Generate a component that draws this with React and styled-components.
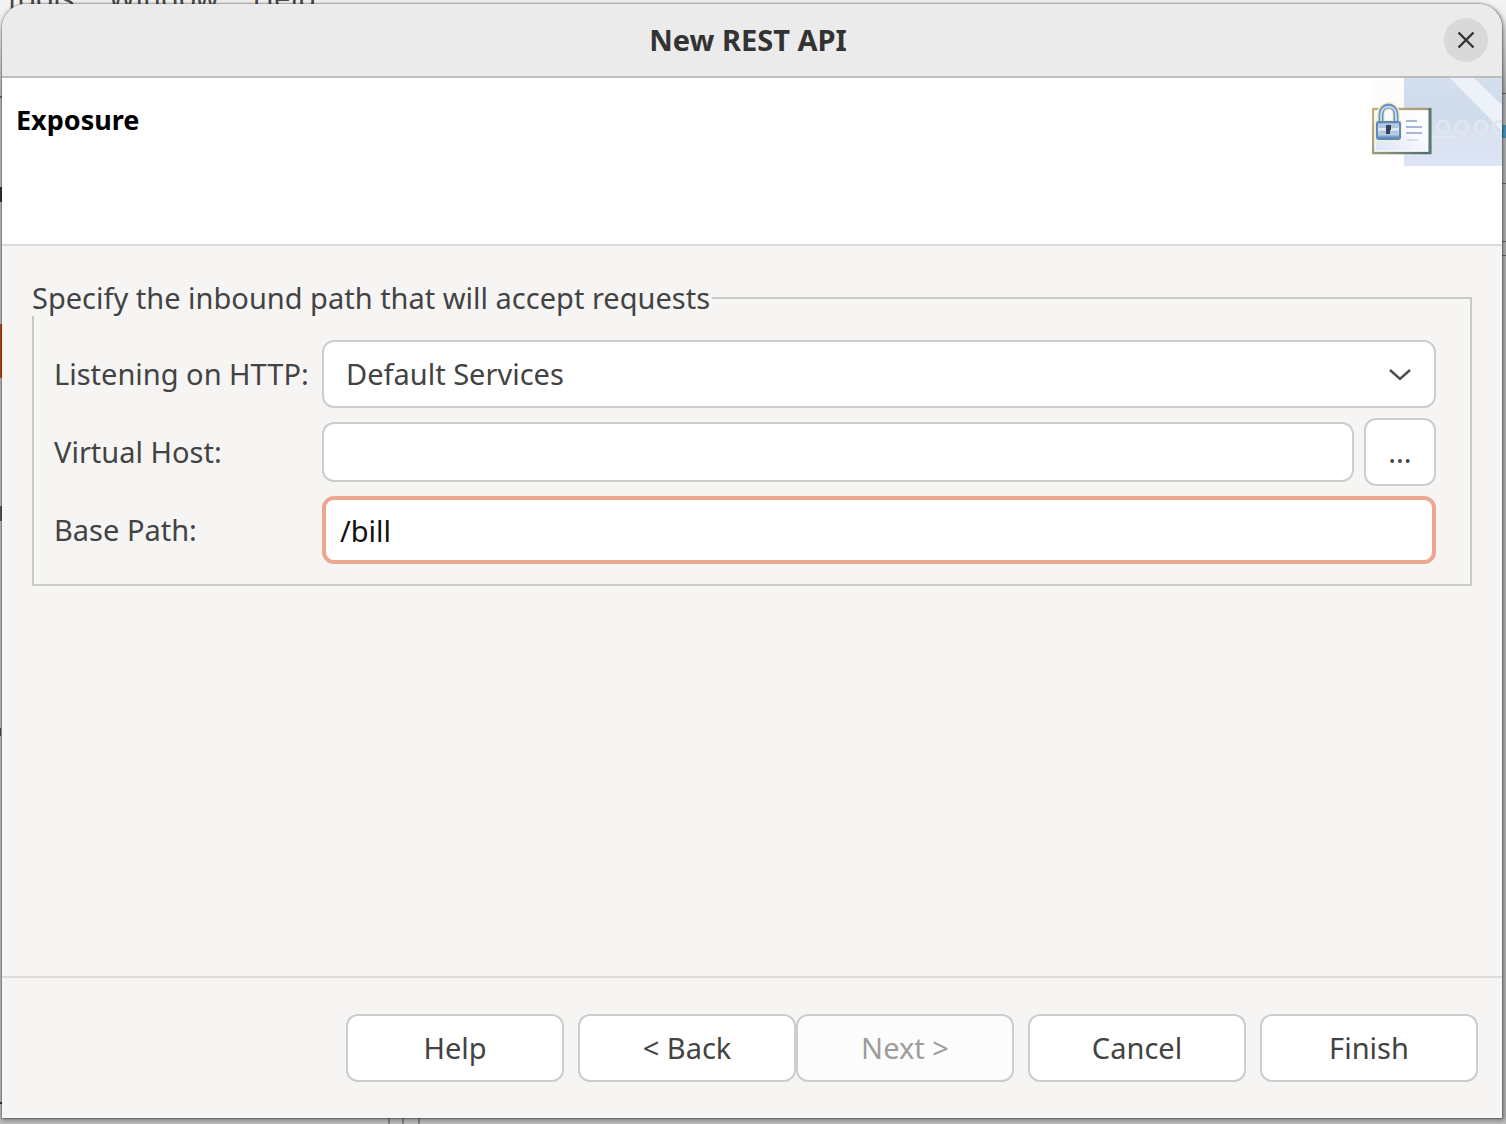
import React, { useState } from "react";
import styled, { createGlobalStyle } from "styled-components";

const GlobalStyle = createGlobalStyle`
  *, *::before, *::after { box-sizing: border-box; }
  body {
    margin: 0;
    font-family: "Noto Sans", "Open Sans", sans-serif;
    font-size: 29px;
    line-height: 36px;
    color: #434343;
  }
`;

const Desktop = styled.div`
  position: relative;
  display: flex;
  min-height: 100vh;
  padding: 4px 4px 6px 2px;
  overflow: hidden;
  background: linear-gradient(#f4f4f4, #f0f0f0 16px, #bcbcbc 90px, #bcbcbc);
`;

const MenuBar = styled.nav`
  position: absolute;
  top: -18px;
  left: 4px;
  display: flex;
  gap: 34px;
  color: #4a4a4a;
  line-height: 32px;
`;

const Fragment = styled.span`
  position: absolute;
  top: ${(p) => p.$top}px;
  ${(p) => p.$side}: 0;
  width: ${(p) => p.$width || 4}px;
  height: ${(p) => p.$height}px;
  background: ${(p) => p.$color || "#6a6a6a"};
`;

const PaneEdge = styled.span`
  position: absolute;
  bottom: 0;
  left: ${(p) => p.$left}px;
  width: 2px;
  height: 6px;
  background: #858585;
`;

const Dialog = styled.main`
  position: relative;
  flex: 1;
  min-width: 0;
  display: flex;
  flex-direction: column;
  background: #f6f5f4;
  border-radius: 24px 24px 0 0;
  box-shadow: 0 0 0 1px rgba(0, 0, 0, 0.15), 1px 1px 4px 1px rgba(0, 0, 0, 0.4);
`;

const TitleBar = styled.header`
  display: grid;
  grid-template-columns: 1fr auto 1fr;
  align-items: center;
  height: 74px;
  padding: 0 14px 0 6px;
  background: #ebebeb;
  border-bottom: 2px solid #bdbdbd;
  border-radius: 24px 24px 0 0;
`;

const Title = styled.h1`
  grid-column: 2;
  margin: 0;
  font-size: 29px;
  line-height: 36px;
  font-weight: 700;
  color: #333333;
`;

const CloseButton = styled.button`
  justify-self: end;
  display: grid;
  place-items: center;
  width: 44px;
  height: 44px;
  padding: 0;
  border: 0;
  border-radius: 50%;
  background: #d9d9d9;
  color: #333333;
`;

const Banner = styled.section`
  display: flex;
  justify-content: space-between;
  align-items: flex-start;
  height: 168px;
  background: #ffffff;
  border-bottom: 2px solid #dcdcdb;
`;

const PageTitle = styled.h2`
  margin: 0;
  padding: 24px 14px;
  font-size: 27px;
  line-height: 36px;
  font-weight: 700;
  color: #000000;
`;

const Content = styled.form`
  flex: 1;
  display: flex;
  flex-direction: column;
`;

const Page = styled.div`
  flex: 1;
  padding: 34px 30px;
`;

const Group = styled.fieldset`
  min-width: 0;
  margin: 0;
  padding: 0;
  border: 2px solid #c9c9c8;
`;

const Legend = styled.legend`
  margin-left: -2px;
  padding: 0 2px 0 0;
`;

const Fields = styled.div`
  display: grid;
  grid-template-columns: 258px 1fr;
  gap: 10px;
  align-items: center;
  padding: 24px 34px 20px 20px;
`;

const Label = styled.label`
  white-space: nowrap;
`;

const Control = styled.div`
  position: relative;
  display: flex;
  align-items: center;
  gap: 10px;
  height: 68px;
`;

const Select = styled.select`
  flex: 1;
  height: 68px;
  padding: 0 60px 0 22px;
  appearance: none;
  border: 2px solid #cdcdcc;
  border-radius: 12px;
  background: #ffffff;
  color: inherit;
  font: inherit;
  outline: none;
`;

const Chevron = styled.svg`
  position: absolute;
  right: 24px;
  pointer-events: none;
`;

const TextInput = styled.input`
  flex: 1;
  min-width: 0;
  height: ${(p) => (p.$active ? 68 : 60)}px;
  padding: 0 14px;
  border: ${(p) => (p.$active ? "4px solid #eba78f" : "2px solid #cdcdcc")};
  border-radius: 12px;
  background: #ffffff;
  color: #111111;
  font: inherit;
  outline: none;
`;

const Button = styled.button`
  width: ${(p) => (p.$compact ? 72 : 218)}px;
  height: 68px;
  padding: 0;
  border: 2px solid #cdcdcc;
  border-radius: 12px;
  background: #ffffff;
  color: inherit;
  font: inherit;

  &:disabled {
    background: #fcfcfc;
    color: #9c9c9c;
  }
`;

const Actions = styled.footer`
  display: flex;
  justify-content: flex-end;
  gap: 14px;
  padding: 36px 24px;
  border-top: 2px solid #dedddc;
`;

const Pager = styled.div`
  display: flex;
`;

function BannerArt() {
  return (
    <svg width="130" height="88" viewBox="0 0 130 88" aria-hidden="true">
      <defs>
        <linearGradient id="sky" x1="0" y1="0" x2="0" y2="1">
          <stop offset="0" stopColor="#d3deee" />
          <stop offset="0.45" stopColor="#cedbea" />
          <stop offset="0.65" stopColor="#dbe3f1" />
          <stop offset="1" stopColor="#dce4f5" />
        </linearGradient>
        <linearGradient id="frame" x1="0" y1="0" x2="1" y2="1">
          <stop offset="0" stopColor="#c9ae78" />
          <stop offset="0.5" stopColor="#a09a78" />
          <stop offset="1" stopColor="#4a6a68" />
        </linearGradient>
        <linearGradient id="paper" x1="0" y1="1" x2="1" y2="0">
          <stop offset="0" stopColor="#d9e2f4" />
          <stop offset="0.6" stopColor="#fafbff" />
          <stop offset="1" stopColor="#ffffff" />
        </linearGradient>
        <linearGradient id="steel" x1="0" y1="0" x2="0" y2="1">
          <stop offset="0" stopColor="#8fafd4" />
          <stop offset="0.4" stopColor="#e2eaf4" />
          <stop offset="0.75" stopColor="#b4c8e0" />
          <stop offset="1" stopColor="#346fad" />
        </linearGradient>
      </defs>
      <rect width="32" height="30" y="2" fill="#fcfcfc" />
      <rect x="32" width="98" height="88" fill="url(#sky)" />
      <path d="M46 0H68L130 62V66Z" fill="none" />
      <path d="M46 0H68Z" fill="none" />
      <path d="M78 0H102L130 27V53Z" fill="#edf1f8" />
      <g fill="none" stroke="#e0e6f0" strokeWidth="3">
        <circle cx="71" cy="49" r="6" />
        <circle cx="90" cy="49" r="6" />
        <circle cx="109" cy="49" r="6" />
        <circle cx="127" cy="49" r="6" />
      </g>
      <path d="M60 59H86" stroke="#e4eaf5" strokeWidth="1" />
      <rect x="1" y="31" width="57" height="44" fill="url(#paper)" stroke="url(#frame)" strokeWidth="2.5" />
      <rect x="3" y="33" width="53" height="40" fill="none" stroke="#ffffff" strokeWidth="1" />
      <path d="M58 30V76" stroke="#5f7a70" strokeWidth="3" />
      <g stroke="#98a5c6" strokeWidth="1.6">
        <path d="M34 43H45" />
        <path d="M34 49H50" />
        <path d="M34 55H50" />
        <path d="M35 62H46" stroke="#d4dae8" />
      </g>
      <path d="M9 46V37C9 25 24 25 24 37V46" fill="none" stroke="#f2f0c4" strokeWidth="8" />
      <rect x="3" y="42" width="27" height="21" rx="3" fill="#f2f0c4" />
      <path d="M9 46V37C9 25 24 25 24 37V46" fill="none" stroke="#6a91bf" strokeWidth="5" />
      <path d="M9 44V37C9 26 24 26 24 37V44" fill="none" stroke="#c3d5e9" strokeWidth="2" />
      <rect x="5" y="44" width="23" height="17" rx="2" fill="url(#steel)" stroke="#5c88bc" strokeWidth="2" />
      <path d="M7 49H26M7 54H26" stroke="#8fabcf" strokeWidth="1" />
      <path d="M14 47H19V52H18V56H14Z" fill="#34415f" />
    </svg>
  );
}

export default function App() {
  const [host, setHost] = useState("");
  const [path, setPath] = useState("/bill");

  return (
    <Desktop>
      <GlobalStyle />
      <MenuBar>
        <span>Tools</span>
        <span>Window</span>
        <span>Help</span>
      </MenuBar>
      <Fragment $side="left" $top={96} $height={2} />
      <Fragment $side="left" $top={187} $height={15} $width={2} $color="#333333" />
      <Fragment $side="left" $top={324} $height={54} $color="#c04018" />
      <Fragment $side="left" $top={506} $height={15} $width={2} $color="#5a5a5a" />
      <Fragment $side="left" $top={728} $height={8} $width={1} $color="#444444" />
      <Fragment $side="left" $top={1102} $height={2} $color="#333333" />
      <Fragment $side="right" $top={93} $height={1} />
      <Fragment $side="right" $top={125} $height={13} $color="#4d9cc4" />
      <Fragment $side="right" $top={183} $height={1} />
      <Fragment $side="right" $top={241} $height={1} />
      <Fragment $side="right" $top={255} $height={1} />
      <PaneEdge $left={388} />
      <PaneEdge $left={402} />
      <PaneEdge $left={418} />

      <Dialog aria-labelledby="dialog-title">
        <TitleBar>
          <Title id="dialog-title">New REST API</Title>
          <CloseButton type="button" aria-label="Close">
            <svg width="18" height="18" viewBox="0 0 18 18" fill="none" stroke="currentColor" strokeWidth="2.4">
              <path d="M1.5 1.5L16.5 16.5M16.5 1.5L1.5 16.5" />
            </svg>
          </CloseButton>
        </TitleBar>

        <Banner>
          <PageTitle>Exposure</PageTitle>
          <BannerArt />
        </Banner>

        <Content onSubmit={(e) => e.preventDefault()}>
          <Page>
            <Group>
              <Legend>Specify the inbound path that will accept requests</Legend>
              <Fields>
                <Label htmlFor="listener">Listening on HTTP:</Label>
                <Control>
                  <Select id="listener" defaultValue="default">
                    <option value="default">Default Services</option>
                  </Select>
                  <Chevron width="24" height="14" viewBox="0 0 24 14" fill="none" stroke="#4a4a4a" strokeWidth="2.4">
                    <path d="M2 3L12 12L22 3" />
                  </Chevron>
                </Control>

                <Label htmlFor="host">Virtual Host:</Label>
                <Control>
                  <TextInput id="host" type="text" value={host} onChange={(e) => setHost(e.target.value)} />
                  <Button type="button" $compact aria-label="Browse virtual hosts">...</Button>
                </Control>

                <Label htmlFor="path">Base Path:</Label>
                <Control>
                  <TextInput id="path" type="text" $active value={path} onChange={(e) => setPath(e.target.value)} />
                </Control>
              </Fields>
            </Group>
          </Page>

          <Actions>
            <Button type="button">Help</Button>
            <Pager>
              <Button type="button">&lt; Back</Button>
              <Button type="button" disabled>Next &gt;</Button>
            </Pager>
            <Button type="button">Cancel</Button>
            <Button type="submit">Finish</Button>
          </Actions>
        </Content>
      </Dialog>
    </Desktop>
  );
}
